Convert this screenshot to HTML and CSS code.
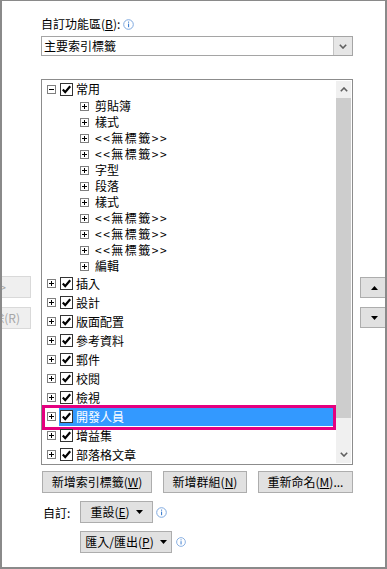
FILE: index.html
```html
<!DOCTYPE html>
<html lang="zh-Hant">
<head>
    <meta charset="UTF-8">
    <meta name="viewport" content="width=device-width, initial-scale=1.0">
    <title>自訂功能區</title>
    <link rel="stylesheet" href="styles.css">
</head>
<body>
    <svg class="defs" width="0" height="0">
        <symbol id="plus" viewBox="0 0 9 9">
            <rect x="0.5" y="0.5" width="8" height="8" fill="#fff" stroke="#7f7f7f"/>
            <path d="M2 4.5H7M4.5 2V7" stroke="#000" fill="none"/>
        </symbol>
        <symbol id="minus" viewBox="0 0 9 9">
            <rect x="0.5" y="0.5" width="8" height="8" fill="#fff" stroke="#7f7f7f"/>
            <path d="M2 4.5H7" stroke="#000" fill="none"/>
        </symbol>
        <symbol id="check" viewBox="0 0 13 13">
            <rect x="0.5" y="0.5" width="12" height="12" fill="#fff" stroke="#333"/>
            <path d="M2.8 6.6L5.2 9.2L10.2 3.2" stroke="#000" stroke-width="2.2" fill="none"/>
        </symbol>
        <symbol id="info" viewBox="0 0 11 11">
            <circle cx="5.5" cy="5.5" r="4.8" fill="#fff" stroke="#7fa9df"/>
            <rect x="5" y="4.6" width="1.1" height="3.6" fill="#3f7fd0"/>
            <rect x="5" y="2.6" width="1.1" height="1.1" fill="#3f7fd0"/>
        </symbol>
        <symbol id="chev-down" viewBox="0 0 8 5">
            <path d="M0.8 0.8L4 4L7.2 0.8" stroke="#5f5f5f" stroke-width="1.6" fill="none"/>
        </symbol>
        <symbol id="chev-up" viewBox="0 0 8 5">
            <path d="M0.8 4.2L4 1L7.2 4.2" stroke="#5f5f5f" stroke-width="1.6" fill="none"/>
        </symbol>
        <symbol id="tri-down" viewBox="0 0 7 4">
            <polygon points="0,0 7,0 3.5,4" fill="#000"/>
        </symbol>
        <symbol id="tri-up" viewBox="0 0 7 4">
            <polygon points="3.5,0 7,4 0,4" fill="#000"/>
        </symbol>
    </svg>

    <div class="dialog">
        <div class="side side-left">
            <button class="btn btn-off add"><span>新增(A) &gt;&gt;</span></button>
            <button class="btn btn-off remove"><span>&lt;&lt; 移除(R)</span></button>
        </div>

        <div class="main">
            <div class="field-label">
                <span>自訂功能區(<u>B</u>):</span>
                <svg class="info"><use href="#info"/></svg>
            </div>
            <div class="select">
                <span class="select-text">主要索引標籤</span>
                <span class="select-btn"><svg class="chev"><use href="#chev-down"/></svg></span>
            </div>

            <div class="list">
                <div class="tree">
                    <div class="node first">
                        <svg class="exp"><use href="#minus"/></svg>
                        <span class="item"><svg class="chk"><use href="#check"/></svg>常用</span>
                    </div>
                    <div class="leaf"><svg class="exp"><use href="#plus"/></svg><span>剪貼簿</span></div>
                    <div class="leaf"><svg class="exp"><use href="#plus"/></svg><span>樣式</span></div>
                    <div class="leaf"><svg class="exp"><use href="#plus"/></svg><span class="notag">&lt;&lt;無標籤&gt;&gt;</span></div>
                    <div class="leaf"><svg class="exp"><use href="#plus"/></svg><span class="notag">&lt;&lt;無標籤&gt;&gt;</span></div>
                    <div class="leaf"><svg class="exp"><use href="#plus"/></svg><span>字型</span></div>
                    <div class="leaf"><svg class="exp"><use href="#plus"/></svg><span>段落</span></div>
                    <div class="leaf"><svg class="exp"><use href="#plus"/></svg><span>樣式</span></div>
                    <div class="leaf"><svg class="exp"><use href="#plus"/></svg><span class="notag">&lt;&lt;無標籤&gt;&gt;</span></div>
                    <div class="leaf"><svg class="exp"><use href="#plus"/></svg><span class="notag">&lt;&lt;無標籤&gt;&gt;</span></div>
                    <div class="leaf"><svg class="exp"><use href="#plus"/></svg><span class="notag">&lt;&lt;無標籤&gt;&gt;</span></div>
                    <div class="leaf"><svg class="exp"><use href="#plus"/></svg><span>編輯</span></div>
                    <div class="node">
                        <svg class="exp"><use href="#plus"/></svg>
                        <span class="item"><svg class="chk"><use href="#check"/></svg>插入</span>
                    </div>
                    <div class="node">
                        <svg class="exp"><use href="#plus"/></svg>
                        <span class="item"><svg class="chk"><use href="#check"/></svg>設計</span>
                    </div>
                    <div class="node">
                        <svg class="exp"><use href="#plus"/></svg>
                        <span class="item"><svg class="chk"><use href="#check"/></svg>版面配置</span>
                    </div>
                    <div class="node">
                        <svg class="exp"><use href="#plus"/></svg>
                        <span class="item"><svg class="chk"><use href="#check"/></svg>參考資料</span>
                    </div>
                    <div class="node">
                        <svg class="exp"><use href="#plus"/></svg>
                        <span class="item"><svg class="chk"><use href="#check"/></svg>郵件</span>
                    </div>
                    <div class="node">
                        <svg class="exp"><use href="#plus"/></svg>
                        <span class="item"><svg class="chk"><use href="#check"/></svg>校閱</span>
                    </div>
                    <div class="node">
                        <svg class="exp"><use href="#plus"/></svg>
                        <span class="item"><svg class="chk"><use href="#check"/></svg>檢視</span>
                    </div>
                    <div class="node selected">
                        <svg class="exp"><use href="#plus"/></svg>
                        <span class="item"><svg class="chk"><use href="#check"/></svg>開發人員</span>
                    </div>
                    <div class="node">
                        <svg class="exp"><use href="#plus"/></svg>
                        <span class="item"><svg class="chk"><use href="#check"/></svg>增益集</span>
                    </div>
                    <div class="node">
                        <svg class="exp"><use href="#plus"/></svg>
                        <span class="item"><svg class="chk"><use href="#check"/></svg>部落格文章</span>
                    </div>
                </div>
                <div class="scrollbar">
                    <div class="sb-arrow"><svg class="chev"><use href="#chev-up"/></svg></div>
                    <div class="sb-thumb"></div>
                    <div class="sb-track"></div>
                    <div class="sb-arrow"><svg class="chev"><use href="#chev-down"/></svg></div>
                </div>
            </div>

            <div class="actions">
                <button class="btn new-tab"><span>新增索引標籤(<u>W</u>)</span></button>
                <button class="btn new-group"><span>新增群組(<u>N</u>)</span></button>
                <button class="btn rename"><span>重新命名(<u>M</u>)...</span></button>
            </div>

            <div class="custom-row">
                <span class="custom-label">自訂:</span>
                <button class="btn drop reset"><span>重設(<u>E</u>)</span><svg class="tri"><use href="#tri-down"/></svg></button>
                <svg class="info"><use href="#info"/></svg>
            </div>
            <div class="custom-row indent">
                <button class="btn drop import"><span>匯入/匯出(<u>P</u>)</span><svg class="tri"><use href="#tri-down"/></svg></button>
                <svg class="info"><use href="#info"/></svg>
            </div>
        </div>

        <div class="side side-right">
            <button class="btn btn-arrow"><svg class="tri"><use href="#tri-up"/></svg></button>
            <button class="btn btn-arrow"><svg class="tri"><use href="#tri-down"/></svg></button>
        </div>
    </div>
</body>
</html>
```

FILE: styles.css
```css
* {
    margin: 0;
    padding: 0;
    box-sizing: border-box;
}
body {
    font-family: "Noto Sans CJK TC", "Noto Sans", sans-serif;
    font-size: 12px;
    color: #000;
    background: #fff;
}
.defs {
    position: absolute;
}
.dialog {
    width: 387px;
    height: 569px;
    border: 2px solid #8a8a8a;
    border-top-width: 1px;
    display: flex;
    overflow: hidden;
    background: #fff;
}
u {
    text-decoration: underline;
    text-underline-offset: 1px;
}

/* buttons */
.btn {
    font-family: inherit;
    font-size: 12px;
    color: #000;
    height: 22px;
    background: #e1e1e1;
    border: 1px solid #adadad;
    display: flex;
    align-items: center;
    justify-content: center;
    line-height: 16px;
    white-space: nowrap;
    flex: none;
}
.btn-off {
    width: 86px;
    background: #efefef;
    border-color: #d9d9d9;
    color: #a6a6a6;
    justify-content: flex-end;
}
.btn-off.add {
    padding-right: 24px;
}
.btn-off.remove {
    padding-right: 10px;
}
.btn-arrow {
    width: 28px;
    height: 21px;
}
.tri {
    width: 7px;
    height: 4px;
    flex: none;
}

/* side columns */
.side {
    display: flex;
    flex-direction: column;
    gap: 9px;
    flex: none;
}
.side-left {
    width: 29px;
    padding-top: 275px;
    align-items: flex-end;
}
.side-right {
    width: 25px;
    margin-left: 7px;
    padding-top: 276px;
}

/* main column */
.main {
    width: 312px;
    margin-left: 10px;
    padding-top: 15px;
    flex: none;
}
.field-label {
    display: flex;
    align-items: center;
    height: 16px;
    line-height: 16px;
}
.info {
    width: 11px;
    height: 11px;
    flex: none;
}
.field-label .info {
    margin-left: 3px;
}
.select {
    margin-top: 4px;
    height: 20px;
    border: 1px solid #a5a5a5;
    display: flex;
    align-items: stretch;
}
.select-text {
    flex: 1;
    padding-left: 2px;
    line-height: 18px;
}
.select-btn {
    width: 19px;
    background: #e6e6e6;
    border-left: 1px solid #c4c4c4;
    display: flex;
    align-items: center;
    justify-content: center;
}
.chev {
    width: 8px;
    height: 5px;
}

/* tree list */
.list {
    margin-top: 23px;
    height: 386px;
    border: 1px solid #8c8c8c;
    display: flex;
}
.tree {
    flex: 1;
    overflow: hidden;
}
.node {
    display: flex;
    align-items: center;
    height: 19px;
    padding-left: 5px;
    position: relative;
}
.node.first {
    height: 18px;
}
.exp {
    width: 9px;
    height: 9px;
    flex: none;
}
.item {
    display: flex;
    align-items: center;
    align-self: stretch;
    flex: 1;
    margin-left: 3px;
    padding-left: 1px;
    line-height: 16px;
}
.chk {
    width: 13px;
    height: 13px;
    margin-right: 3px;
    flex: none;
}
.node.selected .item {
    background: #3399ff;
    color: #fff;
}
.node.selected::after {
    content: "";
    position: absolute;
    left: 0;
    right: 0;
    top: -2px;
    bottom: -4px;
    border: 3px solid #e4007f;
}
.leaf {
    display: flex;
    align-items: center;
    gap: 6px;
    height: 16px;
    padding-left: 38px;
    line-height: 16px;
}
.notag {
    letter-spacing: 1.5px;
}

/* scrollbar */
.scrollbar {
    width: 15px;
    margin: 1px 1px 1px 0;
    background: #f0f0f0;
    display: flex;
    flex-direction: column;
}
.sb-arrow {
    height: 17px;
    display: flex;
    align-items: center;
    justify-content: center;
}
.sb-thumb {
    height: 320px;
    background: #cdcdcd;
}
.sb-track {
    flex: 1;
}

/* bottom controls */
.actions {
    margin-top: 6px;
    display: flex;
    gap: 11px;
    padding-left: 1px;
}
.new-tab {
    width: 110px;
}
.new-group {
    width: 84px;
}
.rename {
    width: 95px;
}
.custom-row {
    margin-top: 8px;
    display: flex;
    align-items: center;
}
.custom-row.indent {
    padding-left: 39px;
}
.custom-label {
    width: 39px;
    padding-left: 2px;
}
.drop {
    gap: 6px;
}
.reset {
    width: 73px;
}
.import {
    width: 92px;
}
.custom-row .info {
    margin-left: 3px;
}
.custom-row.indent .info {
    margin-left: 4px;
    width: 10px;
    height: 10px;
}
```
